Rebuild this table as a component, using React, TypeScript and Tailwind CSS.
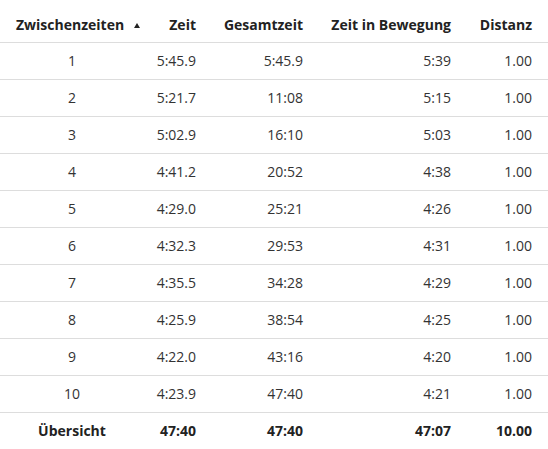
import React from "react";

const splits = [
    ["1", "5:45.9", "5:45.9", "5:39", "1.00"],
    ["2", "5:21.7", "11:08", "5:15", "1.00"],
    ["3", "5:02.9", "16:10", "5:03", "1.00"],
    ["4", "4:41.2", "20:52", "4:38", "1.00"],
    ["5", "4:29.0", "25:21", "4:26", "1.00"],
    ["6", "4:32.3", "29:53", "4:31", "1.00"],
    ["7", "4:35.5", "34:28", "4:29", "1.00"],
    ["8", "4:25.9", "38:54", "4:25", "1.00"],
    ["9", "4:22.0", "43:16", "4:20", "1.00"],
    ["10", "4:23.9", "47:40", "4:21", "1.00"],
];

const cols = "grid grid-cols-[144px_68px_107px_148px_81px]";

export default function App() {
    return (
        <div className="w-[548px] h-[449px] bg-white text-sm text-[#333] font-['Open_Sans',sans-serif]">
            <div className={`${cols} border-b border-[#dddddd] pt-[15px] pb-[7px] font-bold text-[#222] leading-5`}>
                <div className="pl-4 flex items-center">
                    <span>Zwischenzeiten</span>
                    <svg width="6" height="5" viewBox="0 0 6 5" className="ml-[10px] mt-[1px]">
                        <path d="M3 0 L6 5 L0 5 Z" fill="#222"/>
                    </svg>
                </div>
                <div className="pr-4 text-right">Zeit</div>
                <div className="pr-4 text-right">Gesamtzeit</div>
                <div className="pr-4 text-right">Zeit in Bewegung</div>
                <div className="pr-4 text-right">Distanz</div>
            </div>
            {splits.map((row) => (
                <div key={row[0]} className={`${cols} h-[37px] items-center border-b border-[#dddddd]`}>
                    <div className="text-center">{row[0]}</div>
                    <div className="pr-4 text-right">{row[1]}</div>
                    <div className="pr-4 text-right">{row[2]}</div>
                    <div className="pr-4 text-right">{row[3]}</div>
                    <div className="pr-4 text-right">{row[4]}</div>
                </div>
            ))}
            <div className={`${cols} h-[36px] items-center font-bold text-[#222]`}>
                <div className="text-center">Übersicht</div>
                <div className="pr-4 text-right">47:40</div>
                <div className="pr-4 text-right">47:40</div>
                <div className="pr-4 text-right">47:07</div>
                <div className="pr-4 text-right">10.00</div>
            </div>
        </div>
    );
}
